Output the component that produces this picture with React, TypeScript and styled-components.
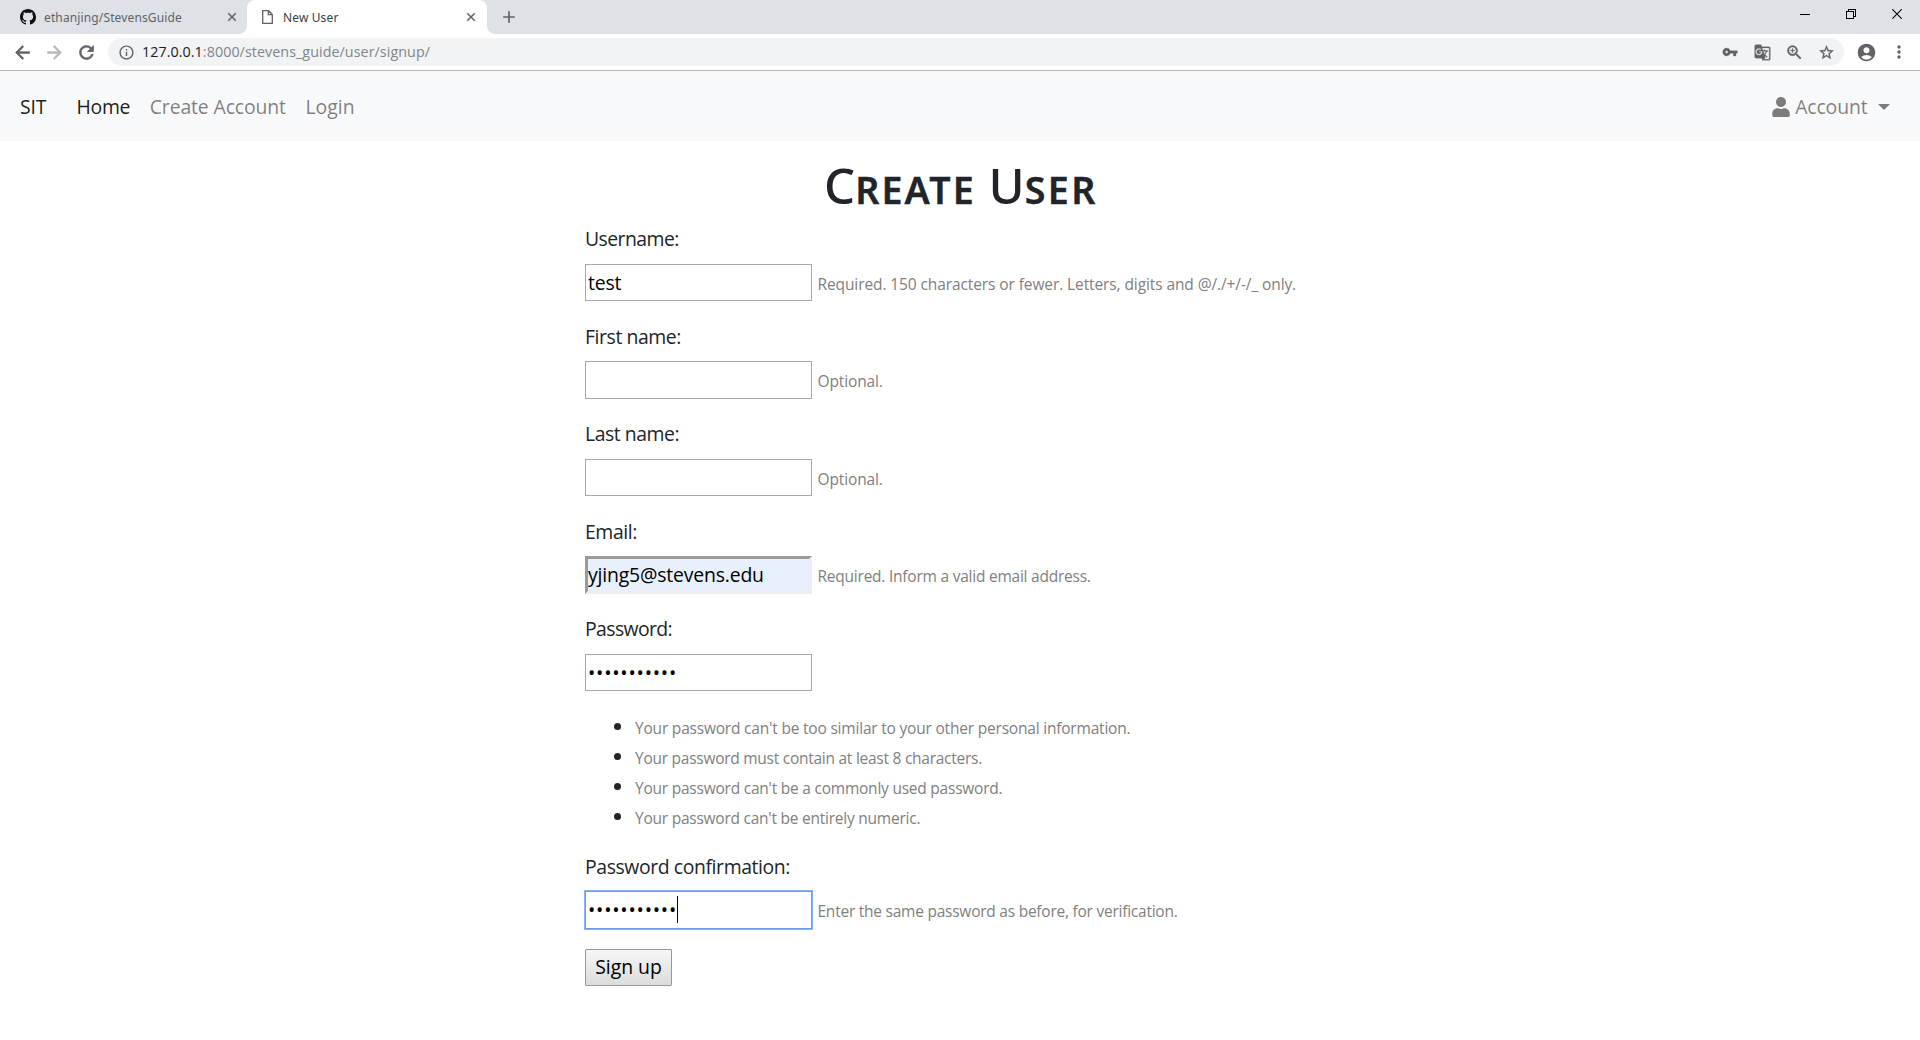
import React from "react";
import styled, { createGlobalStyle, css } from "styled-components";
import {
  MdAccountCircle,
  MdAdd,
  MdArrowBack,
  MdArrowForward,
  MdClose,
  MdGTranslate,
  MdInfoOutline,
  MdMoreVert,
  MdRefresh,
  MdStarBorder,
  MdVpnKey,
  MdZoomIn,
} from "react-icons/md";
import { FaUser } from "react-icons/fa";

const GlobalStyle = createGlobalStyle`
  *, *::before, *::after { box-sizing: border-box; }
  body {
    margin: 0;
    background: #fff;
    color: #212529;
    font-family: "Open Sans", "Noto Sans", sans-serif;
    font-size: 19.4px;
    line-height: 30px;
  }
  svg { display: block; flex: none; }
`;

const Window = styled.div`
  display: flex;
  flex-direction: column;
  height: 1040px;
  overflow: hidden;
`;

/* ---------- browser chrome ---------- */

const TabStrip = styled.div`
  display: flex;
  height: 34px;
  background: #dee1e6;
`;

const Tab = styled.div<{ $active?: boolean; $width: number }>`
  position: relative;
  display: flex;
  align-items: center;
  width: ${(p) => p.$width}px;
  padding: 0 ${(p) => (p.$active ? 9 : 8)}px 0 ${(p) => (p.$active ? 15 : 20)}px;
  color: ${(p) => (p.$active ? "#3c4043" : "#5f6368")};
  ${(p) =>
    p.$active &&
    css`
      background: #fff;
      border-radius: 8px 8px 0 0;
      &::before,
      &::after {
        content: "";
        position: absolute;
        bottom: 0;
        width: 8px;
        height: 8px;
      }
      &::before {
        left: -8px;
        background: radial-gradient(circle at 0 0, transparent 7.5px, #fff 8.2px);
      }
      &::after {
        right: -8px;
        background: radial-gradient(circle at 100% 0, transparent 7.5px, #fff 8.2px);
      }
    `}
`;

const TabTitle = styled.span<{ $gap: number }>`
  flex: 1;
  margin: 1px 0 0 ${(p) => p.$gap}px;
  font: 12px/34px "Noto Sans", sans-serif;
  letter-spacing: 0.13px;
  white-space: nowrap;
`;

const TabClose = styled(MdClose)`
  color: #5f6368;
  path:not([fill="none"]) {
    stroke: currentColor;
    stroke-width: 0.8px;
  }
`;

const NewTab = styled.div`
  display: flex;
  align-items: center;
  margin-left: 12px;
  color: #5f6368;
`;

const WindowControls = styled.div`
  display: flex;
  gap: 36px;
  margin: 9px 18px 0 auto;
`;

const Toolbar = styled.div`
  display: flex;
  align-items: center;
  height: 37px;
  padding: 0 11px;
  background: #fff;
  border-bottom: 1px solid #b6b4b6;
  color: #5f6368;
`;

const NavButton = styled.span<{ $dim?: boolean }>`
  display: grid;
  place-items: center;
  width: 22px;
  margin-right: 10px;
  opacity: ${(p) => (p.$dim ? 0.45 : 1)};
  path:not([fill="none"]) {
    stroke: currentColor;
    stroke-width: 0.7px;
  }
`;

const AddressBar = styled.div`
  display: flex;
  align-items: center;
  flex: 1;
  height: 28px;
  margin-left: 1px;
  padding: 0 9px 0 10px;
  border-radius: 14px;
  background: #f1f3f4;
`;

const Url = styled.span`
  flex: 1;
  margin-left: 7px;
  font-size: 14.3px;
  line-height: 28px;
  letter-spacing: 0.06px;
  color: #80868b;
`;

const UrlHost = styled.span`
  color: #202124;
`;

const AddressActions = styled.div`
  display: grid;
  grid-template-columns: repeat(4, 18px);
  column-gap: 14px;
  place-items: center;
  path:not([fill="none"]) {
    stroke: currentColor;
    stroke-width: 0.4px;
  }
`;

const ToolbarEnd = styled.div`
  display: grid;
  grid-template-columns: 22px 22px;
  column-gap: 11px;
  place-items: center;
  margin-left: 11px;
  margin-right: -1px;
`;

/* ---------- page navigation ---------- */

const Navbar = styled.nav`
  display: flex;
  align-items: center;
  height: 70px;
  padding: 1px 30px 0 20px;
  background: #f8f9fa;
`;

const NavItem = styled.a<{ $left: number; $strong?: boolean; $track?: number }>`
  margin-left: ${(p) => p.$left}px;
  color: ${(p) => (p.$strong ? "rgba(0, 0, 0, 0.9)" : "rgba(0, 0, 0, 0.5)")};
  letter-spacing: ${(p) => p.$track ?? 0}px;
`;

const AccountMenu = styled.div`
  display: flex;
  align-items: center;
  margin-left: auto;
  color: rgba(0, 0, 0, 0.5);
`;

const AccountLabel = styled.span`
  margin: 0 10.5px 0 4.5px;
  letter-spacing: -0.12px;
`;

const CaretDown = styled.span`
  border-top: 6px solid currentColor;
  border-left: 6px solid transparent;
  border-right: 6px solid transparent;
`;

/* ---------- form ---------- */

const Main = styled.main`
  width: 750px;
  margin: 13.5px auto 0;
`;

const Title = styled.h1`
  height: 60px;
  margin: 0 0 9px;
  padding-left: 2px;
  text-align: center;
  font: 500 49px/60px "Noto Sans", sans-serif;
  text-transform: uppercase;
  white-space: nowrap;
`;

const SmallCaps = styled.span<{ $track: number }>`
  font-size: 37.6px;
  font-weight: 600;
  line-height: 1;
  letter-spacing: ${(p) => p.$track}px;
  -webkit-text-stroke: 0.4px currentColor;
`;

const Field = styled.div`
  margin-bottom: 20px;
`;

const Label = styled.label<{ $track: number }>`
  display: block;
  height: 30px;
  margin-bottom: 10px;
  padding-top: 0.75px;
  letter-spacing: ${(p) => p.$track}px;
`;

const InputRow = styled.div`
  display: flex;
  height: 37.5px;
`;

const InputBox = styled.span`
  position: relative;
  display: flex;
  width: 227px;
`;

const Input = styled.input<{ $variant?: "autofill" | "focus" }>`
  width: 100%;
  height: 100%;
  padding: 0 2px;
  border: 1px solid #a9a9a9;
  border-radius: 0;
  outline: none;
  background: #fff;
  color: #000;
  font: inherit;
  letter-spacing: -0.17px;
  &[type="password"] {
    letter-spacing: 0.8px;
  }
  ${(p) =>
    p.$variant === "autofill" &&
    css`
      padding: 0;
      border: 3px solid;
      border-color: #9a9a9a #eee #eee #9a9a9a;
      background: #e8f0fe;
    `}
  ${(p) =>
    p.$variant === "focus" &&
    css`
      border-color: #6c98e4;
      box-shadow: 0 0 0 1px #8ab4f8;
    `}
`;

const TextCaret = styled.span`
  position: absolute;
  left: 92px;
  top: 5px;
  width: 1px;
  height: 27px;
  background: #000;
`;

const Help = styled.small<{ $track?: number }>`
  font-size: 15.5px;
  color: #808080;
  white-space: nowrap;
  letter-spacing: ${(p) => p.$track ?? -0.12}px;
`;

const RowHelp = styled(Help)`
  margin: 2.25px 0 0 5.5px;
  line-height: 37.5px;
`;

const Rules = styled.ul`
  margin: 0 0 20px;
  padding: 0 0 0 29px;
  list-style: none;
`;

const Rule = styled.li`
  display: flex;
  align-items: center;
  gap: 14px;
  height: 30px;
  &::before {
    content: "";
    width: 7px;
    height: 7px;
    margin-top: 1px;
    border-radius: 50%;
    background: #212529;
  }
`;

const RuleText = styled(Help)`
  margin-top: 3px;
`;

const SubmitButton = styled.button`
  display: block;
  width: 87px;
  height: 37.5px;
  padding: 0;
  border: 1px solid #979797;
  border-radius: 1px;
  background: linear-gradient(#f6f6f6, #dcdcdc);
  color: #000;
  font: inherit;
`;

type FieldSpec = {
  label: string;
  labelTrack: number;
  type?: string;
  value?: string;
  help?: string;
  helpTrack?: number;
  variant?: "autofill" | "focus";
};

const fields: FieldSpec[] = [
  {
    label: "Username:",
    labelTrack: -0.55,
    value: "test",
    help: "Required. 150 characters or fewer. Letters, digits and @/./+/-/_ only.",
    helpTrack: -0.1,
  },
  { label: "First name:", labelTrack: -0.42, help: "Optional." },
  { label: "Last name:", labelTrack: -0.45, help: "Optional." },
  {
    label: "Email:",
    labelTrack: -0.4,
    value: "yjing5@stevens.edu",
    help: "Required. Inform a valid email address.",
    helpTrack: -0.23,
    variant: "autofill",
  },
  { label: "Password:", labelTrack: -0.6, type: "password", value: "stevens2019" },
];

const confirmation: FieldSpec = {
  label: "Password confirmation:",
  labelTrack: -0.4,
  type: "password",
  value: "stevens2019",
  help: "Enter the same password as before, for verification.",
  helpTrack: -0.24,
  variant: "focus",
};

const rules = [
  { text: "Your password can't be too similar to your other personal information.", track: -0.2 },
  { text: "Your password must contain at least 8 characters.", track: -0.26 },
  { text: "Your password can't be a commonly used password.", track: -0.23 },
  { text: "Your password can't be entirely numeric.", track: -0.24 },
];

function GithubMark() {
  return (
    <svg width="16" height="16" viewBox="0 0 16 16" fill="#111">
      <path
        fillRule="evenodd"
        d="M8 0C3.58 0 0 3.58 0 8c0 3.54 2.29 6.53 5.47 7.59.4.07.55-.17.55-.38 0-.19-.01-.82-.01-1.49-2.01.37-2.53-.49-2.69-.94-.09-.23-.48-.94-.82-1.13-.28-.15-.68-.52-.01-.53.63-.01 1.08.58 1.23.82.72 1.21 1.87.87 2.33.66.07-.52.28-.87.51-1.07-1.78-.2-3.64-.89-3.64-3.95 0-.87.31-1.59.82-2.15-.08-.2-.36-1.02.08-2.12 0 0 .67-.21 2.2.82.64-.18 1.32-.27 2-.27.68 0 1.36.09 2 .27 1.53-1.04 2.2-.82 2.2-.82.44 1.1.16 1.92.08 2.12.51.56.82 1.27.82 2.15 0 3.07-1.87 3.75-3.65 3.95.29.25.54.73.54 1.48 0 1.07-.01 1.93-.01 2.2 0 .21.15.46.55.38A8.013 8.013 0 0016 8c0-4.42-3.58-8-8-8z"
      />
    </svg>
  );
}

function FormField({ spec }: { spec: FieldSpec }) {
  return (
    <Field>
      <Label $track={spec.labelTrack}>{spec.label}</Label>
      <InputRow>
        <InputBox>
          <Input type={spec.type ?? "text"} defaultValue={spec.value} $variant={spec.variant} />
          {spec.variant === "focus" && <TextCaret />}
        </InputBox>
        {spec.help && <RowHelp $track={spec.helpTrack}>{spec.help}</RowHelp>}
      </InputRow>
    </Field>
  );
}

export default function App() {
  return (
    <Window>
      <GlobalStyle />
      <TabStrip>
        <Tab $width={247}>
          <GithubMark />
          <TabTitle $gap={8}>ethanjing/StevensGuide</TabTitle>
          <TabClose size={14} />
        </Tab>
        <Tab $width={240} $active>
          <svg width="11" height="14" viewBox="0 0 11 14" fill="none" stroke="#5f6368" strokeWidth="1.3">
            <path d="M.7.7h5.8l3.8 3.8v8.8H.7zM6.3.7v4h4" />
          </svg>
          <TabTitle $gap={10}>New User</TabTitle>
          <TabClose size={14} />
        </Tab>
        <NewTab>
          <MdAdd size={20} />
        </NewTab>
        <WindowControls>
          <svg width="10" height="10" stroke="#000" shapeRendering="crispEdges">
            <path d="M0 5.5h10" />
          </svg>
          <svg width="10" height="10" stroke="#000" fill="none" shapeRendering="crispEdges">
            <path d="M.5 2.5h7v7h-7zM2.5 2.5v-2h7v7h-2" />
          </svg>
          <svg width="10" height="10" stroke="#000" strokeWidth="1.1">
            <path d="M.3.3l9.4 9.4M9.7.3L.3 9.7" />
          </svg>
        </WindowControls>
      </TabStrip>
      <Toolbar>
        <NavButton>
          <MdArrowBack size={21} />
        </NavButton>
        <NavButton $dim>
          <MdArrowForward size={21} />
        </NavButton>
        <NavButton>
          <MdRefresh size={21} />
        </NavButton>
        <AddressBar>
          <MdInfoOutline size={17} />
          <Url>
            <UrlHost>127.0.0.1</UrlHost>:8000/stevens_guide/user/signup/
          </Url>
          <AddressActions>
            <MdVpnKey size={16} />
            <MdGTranslate size={17} />
            <MdZoomIn size={19} />
            <MdStarBorder size={17} />
          </AddressActions>
        </AddressBar>
        <ToolbarEnd>
          <MdAccountCircle size={21} />
          <MdMoreVert size={20} />
        </ToolbarEnd>
      </Toolbar>
      <Navbar>
        <NavItem $left={0} $strong $track={-0.1}>
          SIT
        </NavItem>
        <NavItem $left={30} $strong $track={-0.25}>
          Home
        </NavItem>
        <NavItem $left={19.5} $track={-0.12}>
          Create Account
        </NavItem>
        <NavItem $left={19.5}>Login</NavItem>
        <AccountMenu>
          <FaUser size={20} />
          <AccountLabel>Account</AccountLabel>
          <CaretDown />
        </AccountMenu>
      </Navbar>
      <Main>
        <Title>
          C<SmallCaps $track={2.1}>reate</SmallCaps> U<SmallCaps $track={2.5}>ser</SmallCaps>
        </Title>
        {fields.map((spec) => (
          <FormField key={spec.label} spec={spec} />
        ))}
        <Rules>
          {rules.map((rule) => (
            <Rule key={rule.text}>
              <RuleText $track={rule.track}>{rule.text}</RuleText>
            </Rule>
          ))}
        </Rules>
        <FormField spec={confirmation} />
        <SubmitButton>Sign up</SubmitButton>
      </Main>
    </Window>
  );
}
